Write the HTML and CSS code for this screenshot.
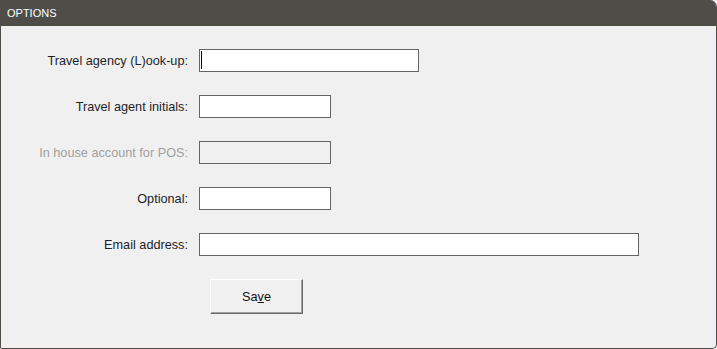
FILE: index.html
```html
<!DOCTYPE html>
<html>
<head>
    <title>Options</title>
    <link rel="stylesheet" href="styles.css">
</head>
<body>
    <div class="panel">
        <div class="panel-header">OPTIONS</div>
        <div class="panel-body">
            <div class="form-grid">
                <label class="field-label">Travel agency (L)ook-up:</label>
                <div class="field field-wide field-focus"></div>

                <label class="field-label">Travel agent initials:</label>
                <div class="field field-short"></div>

                <label class="field-label disabled">In house account for POS:</label>
                <div class="field field-short field-disabled"></div>

                <label class="field-label">Optional:</label>
                <div class="field field-short"></div>

                <label class="field-label">Email address:</label>
                <div class="field field-email"></div>
            </div>
            <div class="actions">
                <button class="save-btn">Sa<u>v</u>e</button>
            </div>
        </div>
    </div>
</body>
</html>
```
FILE: styles.css
```css
* {
    margin: 0;
    padding: 0;
    box-sizing: border-box;
}

body {
    background: #f0f0f0;
    font-family: "Liberation Sans", Arial, sans-serif;
    font-size: 12.7px;
    color: #1a1a1a;
}

.panel {
    width: 717px;
    height: 349px;
    background: #f0f0f0;
    border: 1px solid #4f4d48;
    border-top: none;
    border-radius: 0 7px 5px 2px;
    overflow: hidden;
}

.panel-header {
    height: 26px;
    background: #4f4d48;
    color: #fff;
    padding: 0 6px;
    line-height: 27px;
    font-size: 11px;
}

.panel-body {
    padding: 23px 0 0 0;
}

.form-grid {
    display: grid;
    grid-template-columns: 187px auto;
    column-gap: 11px;
    row-gap: 23px;
    align-items: center;
    justify-items: start;
}

.field-label {
    justify-self: end;
    color: #1e1e2a;
}

.field-label.disabled {
    color: #a0a0a0;
}

.field {
    height: 23px;
    background: #fff;
    border: 1px solid #646464;
}

.field-wide { width: 220px; }
.field-short { width: 132px; }
.field-email { width: 440px; }

.field-disabled {
    background: #f0f0f0;
}

.field-focus {
    position: relative;
}

.field-focus::after {
    content: "";
    position: absolute;
    left: 1px;
    top: 1px;
    width: 1px;
    height: 18px;
    background: #000;
}

.actions {
    padding: 23px 0 0 209px;
}

.save-btn {
    width: 93px;
    height: 35px;
    background: #f0f0f0;
    border: 1px solid;
    border-color: #fff #696969 #696969 #fff;
    box-shadow: inset -1px -1px 0 #a0a0a0;
    font-family: "Liberation Sans", Arial, sans-serif;
    font-size: 12.7px;
    color: #111;
}
```
